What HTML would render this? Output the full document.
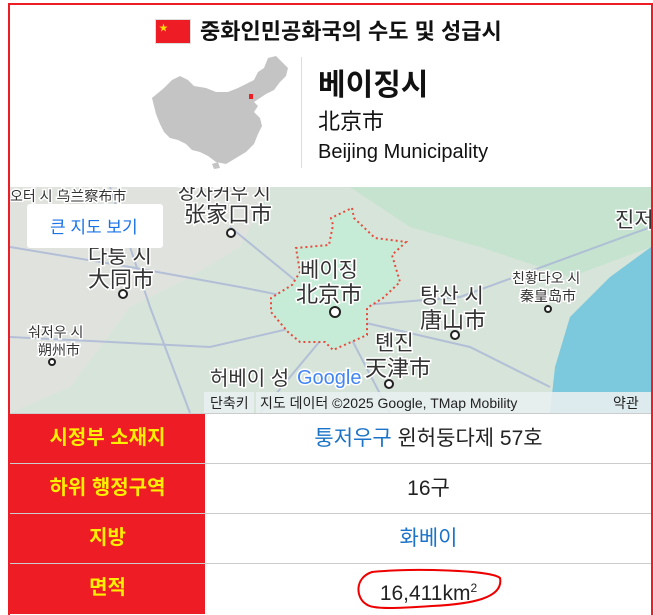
<!DOCTYPE html>
<html><head><meta charset="utf-8"><style>
*{margin:0;padding:0;box-sizing:border-box}
html,body{width:653px;height:615px;overflow:hidden}
body{background:#fff;font-family:"Liberation Sans","Noto Sans CJK KR",sans-serif;position:relative}
.frame{position:absolute;left:8px;top:3px;width:645px;height:612px;border:2px solid #ee1c25;border-bottom:none}
.abs{position:absolute;white-space:nowrap}
.row{position:absolute;left:10px;width:641px;height:50px;border-top:1px solid #ccc}
.lab{position:absolute;left:0;top:0;width:195px;height:50px;background:#ee1c25;color:#ffef00;font-weight:bold;font-size:20px;text-align:center;line-height:49px}
.val{position:absolute;left:196px;top:0;right:0;height:50px;font-size:21px;text-align:center;line-height:49px;color:#222}
.blue{color:#1a73c8}
</style></head><body>
<div class="frame"></div>
<div class="abs" style="left:155px;top:19px;width:36px;height:25px;background:#ee1c25;border:1px solid #ddd"><span style="position:absolute;left:3px;top:1px;color:#ffde00;font-size:9px">★</span></div>
<div class="abs" style="left:200px;top:14px;font-size:22px;font-weight:bold;color:#111">중화인민공화국의 수도 및 성급시</div>
<svg class="abs" style="left:150px;top:54px" width="140" height="116" viewBox="0 0 140 116">
<path d="M2 44 L14 34 L22 26 L30 22 L38 26 L44 32 L56 34 L66 38 L78 38 L88 34 L96 30 L104 26 L108 18 L114 14 L118 4 L126 2 L132 8 L138 14 L136 22 L130 28 L124 36 L116 40 L110 44 L104 48 L108 52 L104 58 L110 64 L112 72 L108 80 L104 90 L96 98 L86 104 L76 110 L66 108 L58 102 L50 98 L42 96 L36 90 L28 86 L20 84 L14 78 L10 70 L6 60 Z" fill="#c4c4c4"/>
<path d="M62 110 L68 108 L70 114 L64 115Z" fill="#c4c4c4"/>
<rect x="99" y="40" width="4" height="5" fill="#ee1c25"/>
</svg>
<div class="abs" style="left:301px;top:57px;width:1px;height:111px;background:#ddd"></div>
<div class="abs" style="left:318px;top:60px;font-size:30px;font-weight:bold;color:#111">베이징시</div>
<div class="abs" style="left:318px;top:104px;font-size:22px;color:#111">北京市</div>
<div class="abs" style="left:318px;top:141px;font-size:20px;color:#111">Beijing Municipality</div>
<svg class="abs" style="left:10px;top:187px" width="641" height="226" viewBox="0 0 641 226">
<rect width="641" height="226" fill="#d7e4d9"/>
<path d="M0 0 H260 L230 60 L180 90 L120 120 L60 200 L0 226Z" fill="#e0e3dd"/>
<path d="M340 0 H641 V60 L560 90 L470 60 L400 40Z" fill="#c5e3cf"/>
<path d="M540 226 L545 180 L560 130 L600 90 L641 60 V226Z" fill="#7cc8dd"/>
<g stroke="#a9b6d6" stroke-width="2" fill="none" opacity=".8">
<path d="M0 60 L120 80 L230 100 L330 120 L450 110 L641 40"/><path d="M100 0 L140 120 L180 226"/><path d="M330 130 L380 226"/><path d="M330 130 L460 160 L540 200"/><path d="M220 40 L330 130 L250 226"/><path d="M0 150 L200 160 L330 130"/>
</g>
<path d="M342 21 L344 31 L365 51 L396 55 L382 68 L390 95 L373 111 L357 121 L357 148 L323 163 L315 155 L290 155 L278 145 L261 125 L261 111 L282 98 L290 85 L286 61 L319 58 L323 38 L321 31Z" fill="#c6ecd7" stroke="#e84a3c" stroke-width="2" stroke-dasharray="2 3"/>
<g font-family="Liberation Sans,Noto Sans CJK KR,sans-serif" fill="#333" stroke="#fff" stroke-width="3" paint-order="stroke" font-size="19">
<text x="168" y="12">장자커우 시</text><text x="174" y="35" font-size="22">张家口市</text>
<text x="78" y="76" font-size="21">다퉁 시</text><text x="78" y="100" font-size="22">大同市</text>
<text x="290" y="90" font-size="21">베이징</text><text x="286" y="115" font-size="22">北京市</text>
<text x="410" y="116" font-size="21">탕산 시</text><text x="410" y="141" font-size="22">唐山市</text>
<text x="365" y="163" font-size="21">톈진</text><text x="355" y="189" font-size="22">天津市</text>
<text x="502" y="96" font-size="14">친황다오 시</text><text x="510" y="114" font-size="14">秦皇岛市</text>
<text x="18" y="150" font-size="14">숴저우 시</text><text x="28" y="168" font-size="14">朔州市</text>
<text x="0" y="14" font-size="14">오터 시 乌兰察布市</text>
<text x="605" y="40" font-size="21">진저</text>
<text x="200" y="198" font-size="20">허베이 성</text>
<text x="287" y="197" font-size="20" fill="#4285f4">Google</text>
</g>
<g fill="#fff" stroke="#222" stroke-width="2"><circle cx="113" cy="107" r="4"/><circle cx="221" cy="46" r="4"/><circle cx="325" cy="125" r="5"/><circle cx="445" cy="148" r="4"/><circle cx="538" cy="122" r="3"/><circle cx="42" cy="175" r="3"/><circle cx="379" cy="197" r="4"/></g>
<rect x="17" y="17" width="136" height="44" rx="3" fill="#fff"/>
<text x="40" y="46" font-size="17" fill="#1a73e8" font-family="Liberation Sans,Noto Sans CJK KR,sans-serif">큰 지도 보기</text>
<rect x="246" y="205" width="395" height="21" fill="#e8eef0" opacity=".9"/>
<rect x="194" y="205" width="50" height="21" fill="#e8eef0" opacity=".9"/>
<g font-size="14" fill="#222" font-family="Liberation Sans,Noto Sans CJK KR,sans-serif"><text x="200" y="221">단축키</text><text x="250" y="221">지도 데이터 ©2025 Google, TMap Mobility</text><text x="603" y="221">약관</text></g>
</svg>
<div class="row" style="top:413px"><div class="lab">시정부 소재지</div><div class="val"><span class="blue">퉁저우구</span> 윈허둥다제 57호</div></div>
<div class="row" style="top:463px"><div class="lab">하위 행정구역</div><div class="val">16구</div></div>
<div class="row" style="top:513px"><div class="lab">지방</div><div class="val blue">화베이</div></div>
<div class="row" style="top:563px"><div class="lab">면적</div><div class="val">16,411km<sup style="font-size:12px">2</sup></div></div>
<svg class="abs" style="left:352px;top:568px" width="152" height="44"><path d="M20 4 C60 0 140 2 148 10 C152 30 120 36 80 38 C50 40 20 42 14 36 C4 30 2 10 20 4Z" fill="none" stroke="#e00" stroke-width="2"/></svg>
</body></html>
